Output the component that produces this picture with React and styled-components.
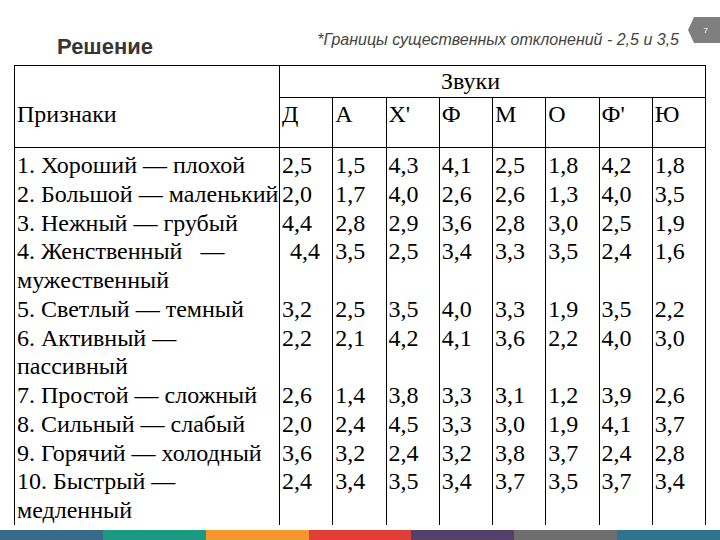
import React from "react";
import styled, { createGlobalStyle } from "styled-components";

const Global = createGlobalStyle`
  html, body { margin: 0; padding: 0; background: #fff; }
  #root { width: 720px; height: 540px; }
`;

const serif = `"Liberation Serif", "Times New Roman", serif`;

const Slide = styled.div`
  position: relative;
  width: 720px;
  height: 540px;
  overflow: hidden;
  background: #fff;
  display: flex;
  flex-direction: column;
`;

const Header = styled.header`
  height: 65px;
  display: flex;
  justify-content: space-between;
  align-items: flex-start;
  padding: 0 41px 0 57px;
  box-sizing: border-box;
`;

const Title = styled.h1`
  margin: 36px 0 0;
  font-family: "Liberation Sans", Arial, sans-serif;
  font-weight: bold;
  font-size: 22px;
  line-height: 22px;
  color: #363636;
`;

const Note = styled.p`
  margin: 32px 0 0;
  font-family: "Liberation Sans", Arial, sans-serif;
  font-style: italic;
  font-size: 16px;
  line-height: 16px;
  color: #444;
`;

const PageTab = styled.div`
  position: absolute;
  top: 17px;
  right: 0;
  width: 32px;
  height: 26px;
  background: #7f7f7f;
  clip-path: polygon(6px 0, 100% 0, 100% 100%, 6px 100%, 0 50%);
  display: flex;
  align-items: center;
  justify-content: flex-end;
  padding-right: 12px;
  box-sizing: border-box;
  font-family: "Liberation Sans", Arial, sans-serif;
  font-size: 8px;
  color: #fff;
`;

const Table = styled.table`
  margin-left: 14px;
  border-collapse: collapse;
  table-layout: fixed;
  width: 691px;
  font-family: ${serif};
  font-size: 24px;
  line-height: 28.75px;
  color: #000;
`;

const HeadCell = styled.th`
  border: 1px solid #000;
  font-family: ${serif};
  font-size: 24px;
  line-height: 28.75px;
  font-weight: normal;
  color: #000;
  text-align: left;
  white-space: nowrap;
  vertical-align: ${(p) => p.$valign || "bottom"};
  height: ${(p) => p.$h}px;
  padding: 0 2px ${(p) => p.$pb || 0}px ${(p) => p.$pl || 2}px;
  box-sizing: border-box;
`;

const Cell = styled.td`
  border-left: 1px solid #000;
  border-right: 1px solid #000;
  font-family: ${serif};
  font-size: 24px;
  line-height: 28.75px;
  color: #000;
  padding: ${(p) => (p.$first ? "3px" : "0")} 2px 0 ${(p) => p.$pl || 2}px;
  vertical-align: top;
  white-space: nowrap;
`;

const Line = styled.div`
  white-space: pre;
`;

const Bar = styled.div`
  margin-top: auto;
  height: 10px;
  display: flex;
`;

const Seg = styled.div`
  flex: 1;
  background: ${(p) => p.$c};
`;

const sounds = ["Д", "А", "Х'", "Ф", "М", "О", "Ф'", "Ю"];

const rows = [
  { label: ["1. Хороший — плохой"], v: "2,5 1,5 4,3 4,1 2,5 1,8 4,2 1,8" },
  { label: ["2. Большой — маленький"], v: "2,0 1,7 4,0 2,6 2,6 1,3 4,0 3,5" },
  { label: ["3. Нежный — грубый"], v: "4,4 2,8 2,9 3,6 2,8 3,0 2,5 1,9" },
  { label: ["4. Женственный   —", "мужественный"], v: "4,4 3,5 2,5 3,4 3,3 3,5 2,4 1,6", indent: true },
  { label: ["5. Светлый — темный"], v: "3,2 2,5 3,5 4,0 3,3 1,9 3,5 2,2" },
  { label: ["6. Активный —", "пассивный"], v: "2,2 2,1 4,2 4,1 3,6 2,2 4,0 3,0" },
  { label: ["7. Простой — сложный"], v: "2,6 1,4 3,8 3,3 3,1 1,2 3,9 2,6" },
  { label: ["8. Сильный — слабый"], v: "2,0 2,4 4,5 3,3 3,0 1,9 4,1 3,7" },
  { label: ["9. Горячий — холодный"], v: "3,6 3,2 2,4 3,2 3,8 3,7 2,4 2,8" },
  { label: ["10. Быстрый —", "медленный"], v: "2,4 3,4 3,5 3,4 3,7 3,5 3,7 3,4" },
];

const colors = ["#386a8b", "#1a9a80", "#f7962b", "#e03e36", "#54406b", "#6e6e6e", "#2f7391"];

export default function App() {
  return (
    <>
      <Global />
      <Slide>
        <Header>
          <Title>Решение</Title>
          <Note>*Границы существенных отклонений - 2,5 и 3,5</Note>
        </Header>
        <PageTab>7</PageTab>
        <Table>
          <colgroup>
            <col style={{ width: "265px" }} />
            {sounds.map((s) => (
              <col key={s} style={{ width: "53.25px" }} />
            ))}
          </colgroup>
          <thead>
            <tr>
              <HeadCell rowSpan={2} $pb={18}>Признаки</HeadCell>
              <HeadCell colSpan={8} $h={32} $valign="middle" $pl={161}>Звуки</HeadCell>
            </tr>
            <tr>
              {sounds.map((s) => (
                <HeadCell key={s} $h={50} $pb={18}>{s}</HeadCell>
              ))}
            </tr>
          </thead>
          <tbody>
            {rows.map((r, i) => (
              <tr key={i}>
                <Cell $first={i === 0}>
                  {r.label.map((l, j) => (
                    <Line key={j}>{l}</Line>
                  ))}
                </Cell>
                {r.v.split(" ").map((n, j) => (
                  <Cell key={j} $first={i === 0} $pl={r.indent && j === 0 ? 10 : 2}>
                    {n}
                  </Cell>
                ))}
              </tr>
            ))}
          </tbody>
        </Table>
        <Bar>
          {colors.map((c) => (
            <Seg key={c} $c={c} />
          ))}
        </Bar>
      </Slide>
    </>
  );
}
